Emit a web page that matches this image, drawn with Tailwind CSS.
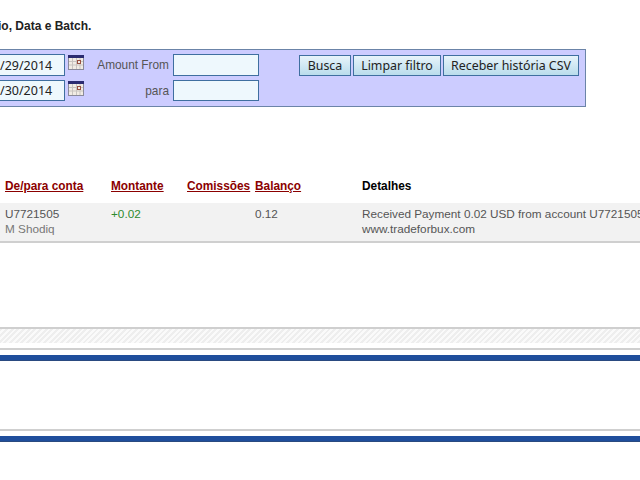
<!DOCTYPE html>
<html lang="pt">
<head>
    <meta charset="UTF-8">
    <title>Histórico</title>
    <script src="https://cdn.jsdelivr.net/npm/@tailwindcss/browser@4"></script>
</head>
<body class="bg-white overflow-hidden w-[640px] h-[480px] font-['Liberation_Sans',Arial,sans-serif] text-[11.85px] text-[#555]">

<!-- titulo -->
<div class="h-[49px] pt-[19px] -ml-[2px] text-[12px] leading-[15px] font-bold text-[#222] whitespace-nowrap">io, Data e Batch.</div>

<!-- filtro -->
<div class="w-[586px] h-[58px] bg-[#ccccff] border border-[#6b84a8] border-l-0 flex">
    <div class="w-[65px] pt-[4px] flex flex-col gap-[4px] shrink-0">
        <div class="h-[22px] bg-[#eef8fd] border border-[#3f6fa0] border-l-0 text-[12.5px] leading-[21px] text-[#222] font-['Noto_Sans',sans-serif] whitespace-nowrap">/29/2014</div>
        <div class="h-[21px] bg-[#eef8fd] border border-[#3f6fa0] border-l-0 text-[12.5px] leading-[20px] text-[#222] font-['Noto_Sans',sans-serif] whitespace-nowrap">/30/2014</div>
    </div>
    <div class="w-[17px] ml-[3px] pt-[5px] flex flex-col gap-[11px] shrink-0">
        <svg width="16" height="15" viewBox="0 0 16 15"><rect x="0.5" y="0.5" width="15" height="14" fill="#f1ece4" stroke="#8a8a9a"/><rect x="0" y="0" width="16" height="3" fill="#2b2b70"/><path d="M4.5 3v11M8.5 3v11M12 3v11M1 6.5h14M1 10h14" stroke="#c9c4c0"/><rect x="9.5" y="5.5" width="3" height="3" fill="#f1ece4" stroke="#9a5040"/></svg>
        <svg width="16" height="15" viewBox="0 0 16 15"><rect x="0.5" y="0.5" width="15" height="14" fill="#f1ece4" stroke="#8a8a9a"/><rect x="0" y="0" width="16" height="3" fill="#2b2b70"/><path d="M4.5 3v11M8.5 3v11M12 3v11M1 6.5h14M1 10h14" stroke="#c9c4c0"/><rect x="9.5" y="5.5" width="3" height="3" fill="#f1ece4" stroke="#9a5040"/></svg>
    </div>
    <div class="w-[84px] pt-[4px] flex flex-col gap-[4px] text-right text-[#555] shrink-0">
        <div class="h-[22px] leading-[22px]">Amount From</div>
        <div class="h-[21px] leading-[23px]">para</div>
    </div>
    <div class="w-[86px] ml-[4px] pt-[4px] flex flex-col gap-[4px] shrink-0">
        <div class="h-[22px] bg-[#eef8fd] border border-[#3f6fa0]"></div>
        <div class="h-[21px] bg-[#eef8fd] border border-[#3f6fa0]"></div>
    </div>
    <div class="ml-[40px] pt-[5px] flex gap-[2px] items-start font-['Noto_Sans',sans-serif] text-[12.4px] text-[#222] shrink-0">
        <div class="w-[52px] h-[21px] leading-[20px] text-center border border-[#3f6fa0] bg-gradient-to-b from-[#e8f4fa] to-[#b9dcec]">Busca</div>
        <div class="w-[88px] h-[21px] leading-[20px] text-center border border-[#3f6fa0] bg-gradient-to-b from-[#e8f4fa] to-[#b9dcec]">Limpar filtro</div>
        <div class="w-[136px] h-[21px] leading-[20px] text-center border border-[#3f6fa0] bg-gradient-to-b from-[#e8f4fa] to-[#b9dcec] whitespace-nowrap">Receber história CSV</div>
    </div>
</div>

<!-- tabela -->
<div class="mt-[71px] w-[640px]">
    <div class="grid grid-cols-[111px_76px_68px_107px_1fr] h-[25px] pt-[1px] font-bold leading-[15px] pl-[5px] whitespace-nowrap">
        <span class="text-[#8b0000] underline">De/para conta</span>
        <span class="text-[#8b0000] underline -ml-[5px]">Montante</span>
        <span class="text-[#8b0000] underline -ml-[5px]">Comissões</span>
        <span class="text-[#8b0000] underline -ml-[5px]">Balanço</span>
        <span class="text-black -ml-[5px]">Detalhes</span>
    </div>
    <div class="grid grid-cols-[111px_76px_68px_107px_1fr] h-[40px] bg-[#f2f2f2] border-b-2 border-[#cfcfcf] pl-[5px] pt-[3px] text-[11.75px] leading-[15px] whitespace-nowrap overflow-hidden">
        <div>U7721505<br><span class="text-[#777]">M Shodiq</span></div>
        <div class="text-[#2e8b2e] -ml-[5px]">+0.02</div>
        <div></div>
        <div class="-ml-[5px]">0.12</div>
        <div class="-ml-[5px]">Received Payment 0.02 USD from account U7721505<br>www.tradeforbux.com</div>
    </div>
</div>

<!-- rodape -->
<div class="mt-[84px] h-[16px] border-t-2 border-[#cfcfcf] bg-[repeating-linear-gradient(135deg,#eeeeee_0px,#eeeeee_2px,#fafafa_2px,#fafafa_4px)]"></div>
<div class="mt-[5px] h-[2px] bg-[#cfcfcf]"></div>
<div class="mt-[5px] h-[6px] bg-[#1f4e9c] border-b border-[#2a4a80]"></div>
<div class="mt-[68px] h-[2px] bg-[#cfcfcf]"></div>
<div class="mt-[5px] h-[6px] bg-[#1f4e9c] border-b border-[#2a4a80]"></div>

</body>
</html>
